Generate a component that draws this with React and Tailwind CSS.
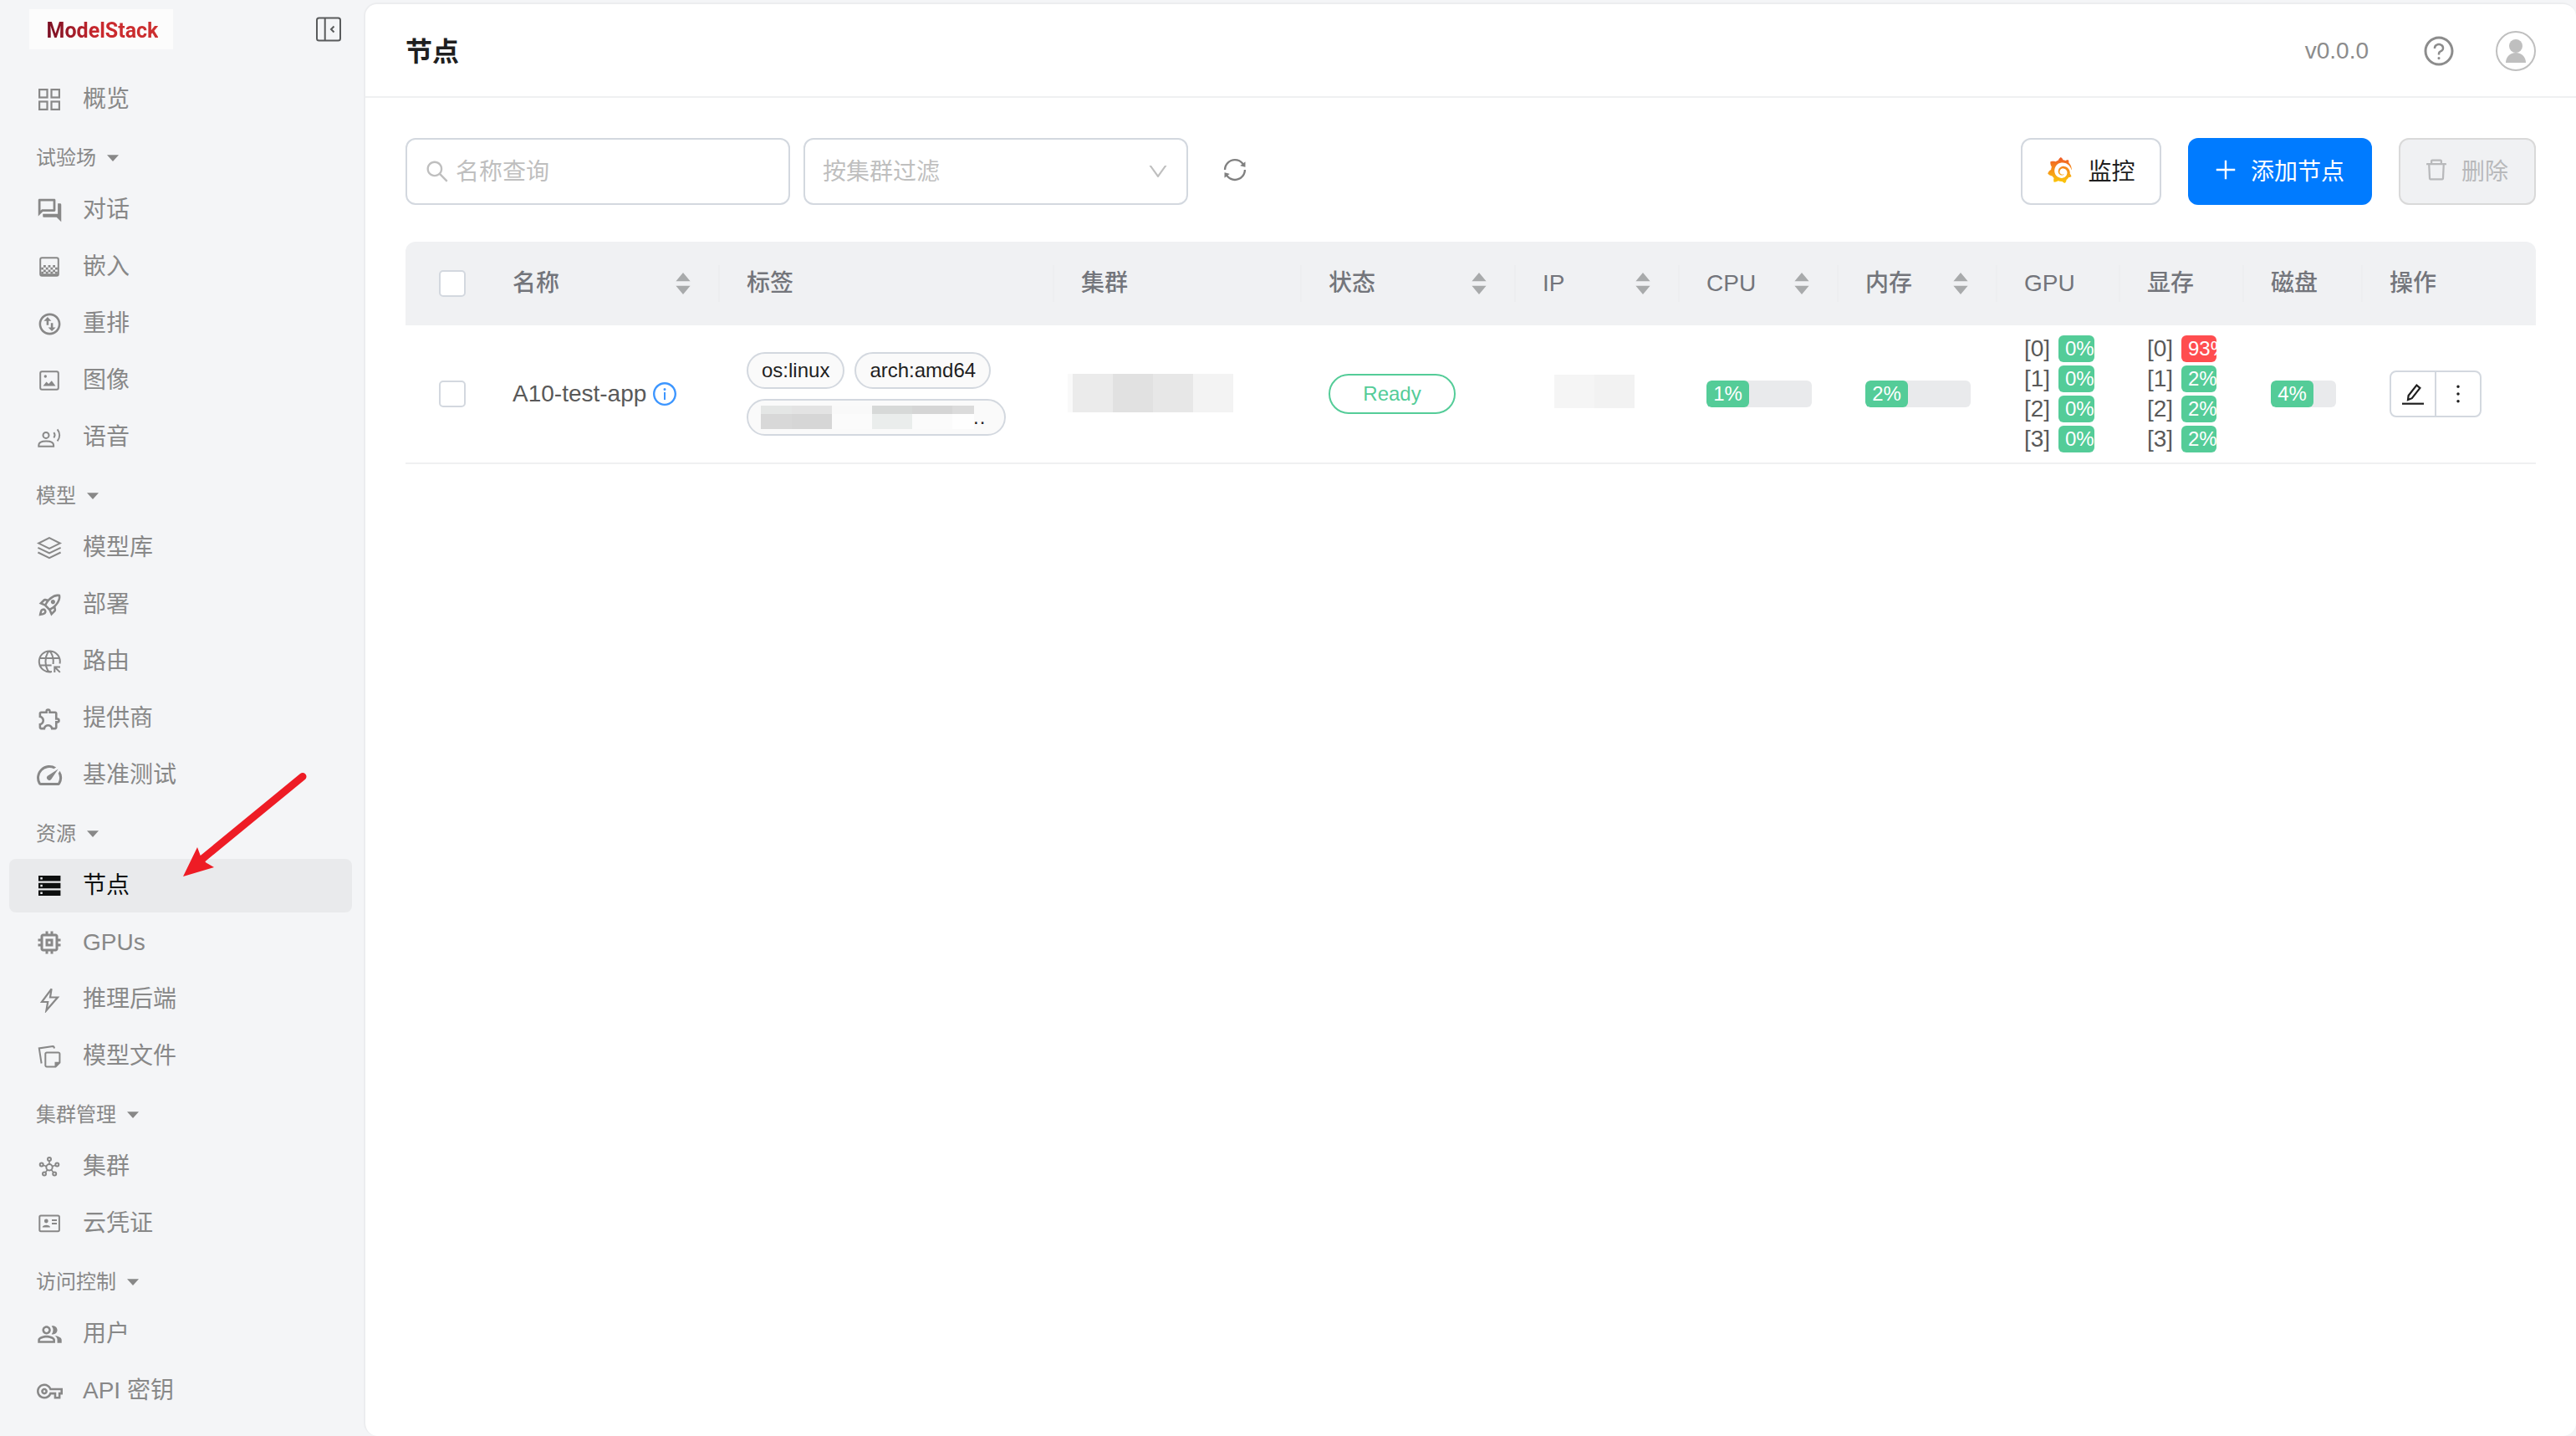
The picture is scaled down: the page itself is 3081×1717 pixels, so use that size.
import React, { useState } from "react";
import {
  MdOutlineForum,
  MdOutlineSwapVerticalCircle,
  MdOutlineRocketLaunch,
  MdOutlineExtension,
  MdOutlineSpeed,
  MdOutlineMemory,
  MdOutlinePeopleAlt,
  MdOutlineVpnKey,
} from "react-icons/md";
import {
  AiOutlineSearch,
  AiOutlineDown,
  AiOutlineSync,
  AiOutlinePlus,
  AiOutlineDelete,
  AiOutlineInfoCircle,
  AiOutlineQuestionCircle,
  AiOutlineMore,
} from "react-icons/ai";
import { SiGrafana } from "react-icons/si";

// Shared wrapper for the hand drawn menu icons
const Glyph = ({ children }) => (
  <svg viewBox="0 0 32 32" className="w-8 h-8" fill="none" stroke="currentColor" strokeWidth="2">
    {children}
  </svg>
);

const GridIcon = () => (
  <Glyph>
    <rect x="4.1" y="4.1" width="9.4" height="9.4" strokeWidth="2.2" />
    <rect x="18.5" y="4.1" width="9.4" height="9.4" strokeWidth="2.2" />
    <rect x="4.1" y="18.5" width="9.4" height="9.4" strokeWidth="2.2" />
    <rect x="18.5" y="18.5" width="9.4" height="9.4" strokeWidth="2.2" />
  </Glyph>
);

const EmbedIcon = () => (
  <Glyph>
    <rect x="5.2" y="5.2" width="21.6" height="21.6" rx="2" />
    <g fill="currentColor" stroke="none">
      <path d="M9 14h2.8v2.8H9zM14.6 14h2.8v2.8h-2.8zM20.2 14H23v2.8h-2.8z" />
      <path d="M6.2 16.8H9v2.8H6.2zM11.8 16.8h2.8v2.8h-2.8zM17.4 16.8h2.8v2.8h-2.8zM23 16.8h2.8v2.8H23z" />
      <path d="M9 19.6h2.8v2.8H9zM14.6 19.6h2.8v2.8h-2.8zM20.2 19.6H23v2.8h-2.8z" />
      <path d="M6.2 21.8H9v2.4H6.2zM11.8 21.8h2.8v2.4h-2.8zM17.4 21.8h2.8v2.4h-2.8zM23 21.8h2.8v2.4H23z" />
      <path d="M6 24.2h20v2H6z" />
    </g>
  </Glyph>
);

const ImageIcon = () => (
  <Glyph>
    <rect x="5.2" y="5.2" width="21.6" height="21.6" rx="2" />
    <circle cx="11.3" cy="11" r="1.7" fill="currentColor" stroke="none" />
    <path d="M8.5 22.4l4-5 2.7 2.6 3.6-3.8 4.7 6.2z" fill="currentColor" stroke="none" />
  </Glyph>
);

const VoiceIcon = () => (
  <Glyph>
    <circle cx="12" cy="13.4" r="3.5" />
    <path d="M3.3 26.7v-1.5c0-3 3.6-4.8 8.9-4.8s8.9 1.8 8.9 4.8v1.5z" />
    <path d="M21.3 10.2c1.5 1.9 1.5 4.3 0 6.2M25.6 6.4c3.4 4.2 3.4 9.7 0 14" />
  </Glyph>
);

const LayersIcon = () => (
  <Glyph>
    <path d="M16 4.2l12.8 6.4L16 17 3.2 10.6z" />
    <path d="M2.4 15.9L16 22.5l13.6-6.6M2.4 21.5L16 28.1l13.6-6.6" />
  </Glyph>
);

const RouteIcon = () => (
  <Glyph>
    <path d="M19 28.1A12.5 12.5 0 1 1 28.500 18.500M3.600 12h24.800M3.600 20.500h15M18 28.400c-2 .300-3-.400-4-2-3.400-5.600-3.400-15.200 0-20.800 1.200-2.200 2.800-2.200 4 0 2.400 4 3.200 8.600 2.600 13.400" />
    <path d="M22.3 29v-6.6h6.7M22.6 22.7l6.2 6.2" />
  </Glyph>
);

const NodesIcon = () => (
  <Glyph>
    <path
      d="M3 4h26.4v6.5H3zM5.3 6v2.5h2.5V6zM3 12.7h26.4v6.5H3zM5.3 14.7v2.5h2.5v-2.5zM3 21.4h26.4v6.5H3zM5.3 23.4v2.5h2.5v-2.5z"
      fill="currentColor"
      fillRule="evenodd"
      stroke="none"
    />
  </Glyph>
);

const BoltIcon = () => (
  <Glyph>
    <path d="M18.6 3.3L7 19h7.2l-1.8 10.2L26 13.5h-9z" strokeWidth="2.2" />
  </Glyph>
);

const FilesIcon = () => (
  <Glyph>
    <path d="M23.5 28.5H13a1.7 1.7 0 0 1-1.7-1.7V13.1a1.7 1.7 0 0 1 1.7-1.7h13.7a1.7 1.7 0 0 1 1.7 1.7v10.5z" />
    <path d="M22.5 29.3v-6.5h6.6z" fill="currentColor" stroke="none" />
    <path d="M6.6 24.5L3.8 6.4l16.4-2.5c.9 0 1.5.5 1.8 2.6" />
  </Glyph>
);

const ClusterIcon = () => (
  <Glyph>
    <circle cx="16" cy="16.8" r="3.7" />
    <circle cx="16" cy="7" r="2" />
    <circle cx="6.7" cy="13.6" r="2" />
    <circle cx="25.3" cy="13.6" r="2" />
    <circle cx="10" cy="24.6" r="2" />
    <circle cx="22.2" cy="24.6" r="2" />
    <path d="M16 9v4M8.600 14.300l3.800 1.200M23.400 14.300l-3.800 1.200M11.200 23l2.600-3.200M21 23l-2.600-3.200" strokeWidth="1.6" />
  </Glyph>
);

const CredentialIcon = () => (
  <Glyph>
    <rect x="4.3" y="6.4" width="23.6" height="18.8" rx="1.6" />
    <circle cx="12.3" cy="13" r="2.4" fill="currentColor" stroke="none" />
    <path d="M7.7 20.4c0-3.6 9.3-3.6 9.3 0z" fill="currentColor" stroke="none" />
    <path d="M19 12h6M19 16h6" />
  </Glyph>
);

const EditIcon = () => (
  <svg viewBox="0 0 28 28" className="w-7 h-7" fill="none" stroke="currentColor" strokeWidth="2.2">
    <path d="M18.4 3.6l4 3.4-9.6 12.2-4.8 1.8.6-5z" />
    <path d="M1 25.700h26" />
  </svg>
);

const menu = [
  { items: [{ label: "概览", icon: <GridIcon /> }] },
  {
    title: "试验场",
    items: [
      { label: "对话", icon: <MdOutlineForum size={33} /> },
      { label: "嵌入", icon: <EmbedIcon /> },
      { label: "重排", icon: <MdOutlineSwapVerticalCircle size={31} /> },
      { label: "图像", icon: <ImageIcon /> },
      { label: "语音", icon: <VoiceIcon /> },
    ],
  },
  {
    title: "模型",
    items: [
      { label: "模型库", icon: <LayersIcon /> },
      { label: "部署", icon: <MdOutlineRocketLaunch size={31} /> },
      { label: "路由", icon: <RouteIcon /> },
      { label: "提供商", icon: <MdOutlineExtension size={31} /> },
      { label: "基准测试", icon: <MdOutlineSpeed size={36} /> },
    ],
  },
  {
    title: "资源",
    items: [
      { label: "节点", icon: <NodesIcon /> },
      { label: "GPUs", icon: <MdOutlineMemory size={36} /> },
      { label: "推理后端", icon: <BoltIcon /> },
      { label: "模型文件", icon: <FilesIcon /> },
    ],
  },
  {
    title: "集群管理",
    items: [
      { label: "集群", icon: <ClusterIcon /> },
      { label: "云凭证", icon: <CredentialIcon /> },
    ],
  },
  {
    title: "访问控制",
    items: [
      { label: "用户", icon: <MdOutlinePeopleAlt size={31} /> },
      { label: "API 密钥", icon: <MdOutlineVpnKey size={31} /> },
    ],
  },
];

const columns = [
  { title: "名称", width: "w-[280px]", sort: true },
  { title: "标签", width: "w-[400px]" },
  { title: "集群", width: "w-[296px]" },
  { title: "状态", width: "w-[256px]", sort: true },
  { title: "IP", width: "w-[196px]", sort: true },
  { title: "CPU", width: "w-[190px]", sort: true },
  { title: "内存", width: "w-[190px]", sort: true },
  { title: "GPU", width: "w-[147px]" },
  { title: "显存", width: "w-[148px]" },
  { title: "磁盘", width: "w-[142px]" },
  { title: "操作", width: "w-[207px]", last: true },
];

const gpus = [0, 0, 0, 0];
const vram = [93, 2, 2, 2];

const Sidebar = ({ active, onSelect }) => (
  <aside className="w-[435px] shrink-0 text-[#888888]">
    <div className="flex justify-between h-[87px] pt-[11px] pl-[35px] pr-[27px]">
      <div className="w-[172px] h-12 pl-[3px] pt-0.5 bg-[#fcfcfc] flex items-center justify-center">
        <span className="font-[Roboto] font-bold text-[25px] leading-none bg-gradient-to-r from-[#7a1024] via-[#c9282d] via-45% to-[#cc3030] bg-clip-text text-transparent">
          ModelStack
        </span>
      </div>
      <svg viewBox="0 0 30 30" className="w-[30px] h-[30px] mt-[9px] text-[#595b5c]" fill="none" stroke="currentColor" strokeWidth="2">
        <rect x="1" y="1.5" width="28" height="27" rx="2.5" />
        <path d="M10.700 1.500v27M21.500 11.500L18 15l3.500 3.500" />
      </svg>
    </div>
    {menu.map((group, index) => (
      <div key={index}>
        {group.title && (
          <div className="h-16 flex items-center pl-[43px] text-2xl leading-none">
            <span className="pt-1">{group.title}</span>
            <svg viewBox="0 0 14 8" className="w-3.5 h-2 ml-[13px] mt-1" fill="currentColor">
              <path d="M0 .3h14L7 8z" />
            </svg>
          </div>
        )}
        {group.items.map((item) => (
          <div
            key={item.label}
            onClick={() => onSelect(item.label)}
            className={
              "h-16 mb-1 ml-[11px] mr-[14px] pl-8 rounded-lg flex items-center cursor-pointer " +
              (active === item.label ? "bg-[#e9eaec] text-[#0d0f0f]" : "")
            }
          >
            <span className="w-8 h-8 flex items-center justify-center *:shrink-0">{item.icon}</span>
            <span className="ml-6 text-[28px] leading-8 whitespace-nowrap">{item.label}</span>
          </div>
        ))}
      </div>
    ))}
  </aside>
);

const Checkbox = () => <span className="w-8 h-8 rounded-[5px] border-2 border-[#d3d8df] bg-white" />;

const Sorter = () => (
  <svg viewBox="0 0 18 26" className="w-[18px] h-[26px]" fill="#a8aaab">
    <path d="M9 0l8.600 10.200H.4zM9 26L.4 15.800h17.200z" />
  </svg>
);

const Progress = ({ value, width }) => (
  <div className={"h-8 rounded-[6px] bg-[#e9eaec] overflow-hidden " + width}>
    <div className="w-[51px] h-8 rounded-[6px] bg-[#54cc98] text-white text-2xl leading-8 text-center">{value}%</div>
  </div>
);

const DeviceList = ({ values, width }) => (
  <div className="flex flex-col gap-1">
    {values.map((value, index) => (
      <div key={index} className="flex items-center h-8">
        <span className="w-[41px] text-[28px] leading-8">[{index}]</span>
        <span
          className={
            "h-8 pl-2 rounded-[6px] overflow-hidden text-white text-2xl leading-8 " +
            width +
            (value > 80 ? " bg-[#ff4d4f]" : " bg-[#54cc98]")
          }
        >
          {value}%
        </span>
      </div>
    ))}
  </div>
);

const Tag = ({ children }) => (
  <span className="h-11 px-4 rounded-full border-2 border-[#d3d8df] bg-[#fafafa] text-2xl leading-10 text-[#1f1f1f]">
    {children}
  </span>
);

// Redacted values are shown as grey tiles
const MaskedLabel = () => (
  <div className="w-[310px] h-11 rounded-full border-2 border-[#d3d8df] bg-[#fafafa] flex items-center pl-[15px] text-[#1f1f1f]">
    <div className="h-7 flex flex-col">
      <div className="h-2.5 flex">
        <i className="w-[37px] bg-[#e4e6e5]" />
        <i className="w-12 bg-[#e3e3e3]" />
        <i className="w-12 bg-[#f9f9f9]" />
        <i className="w-12 bg-[#d7d9d8]" />
        <i className="w-12 bg-[#d5d5d5]" />
        <i className="w-[26px] bg-[#dbdbdb]" />
      </div>
      <div className="h-[18px] flex">
        <i className="w-[37px] bg-[#d8d8d8]" />
        <i className="w-12 bg-[#d6d6d6]" />
        <i className="w-12 bg-[#fbfbfb]" />
        <i className="w-12 bg-[#eaedec]" />
        <i className="w-12 bg-[#fbfbfb]" />
        <i className="w-[26px] bg-[#fefefe]" />
      </div>
    </div>
    <span className="-ml-px text-2xl leading-8 tracking-[1px]">..</span>
  </div>
);

const App = () => {
  const [active, setActive] = useState("节点");

  return (
    <div className="relative flex w-full h-[1717px] overflow-hidden bg-[#f4f5f7] font-['Liberation_Sans','Noto_Sans_CJK_SC',sans-serif]">
      <Sidebar active={active} onSelect={setActive} />

      <main className="flex-1 mt-[3px] rounded-2xl border-2 border-r-0 border-b-0 border-[#ecedef] bg-white">
        <header className="h-[112px] flex items-center justify-between pl-12 pr-12 pt-0.5 border-b-2 border-[#eff0f1]">
          <h1 className="text-[32px] leading-10 pt-px font-bold text-[#1f1f1f]">节点</h1>
          <div className="flex items-center text-[#8c8c8c]">
            <span className="text-[28px] leading-8">v0.0.0</span>
            <AiOutlineQuestionCircle size={40} className="ml-16" />
            <span className="ml-12 w-12 h-12 rounded-full border-2 border-[#bfbfbf] flex items-center justify-center">
              <svg viewBox="0 0 24 28" className="w-6 h-7" fill="#bfbfbf">
                <circle cx="12" cy="8" r="8" />
                <path d="M0 28c0-7 5-12 12-12s12 5 12 12z" />
              </svg>
            </span>
          </div>
        </header>

        <div className="px-12 pt-12">
          <div className="flex items-center h-20">
            <div className="w-[460px] h-20 px-5 rounded-xl border-2 border-[#d3d8df] flex items-center text-[#bfbfbf]">
              <AiOutlineSearch size={32} />
              <span className="ml-1.5 text-[28px] leading-8 pt-0.5">名称查询</span>
            </div>
            <div className="w-[460px] h-20 ml-4 pl-[21px] pr-5 rounded-xl border-2 border-[#d3d8df] flex items-center justify-between text-[#bfbfbf]">
              <span className="text-[28px] leading-8 pt-0.5">按集群过滤</span>
              <AiOutlineDown size={28} />
            </div>
            <AiOutlineSync size={32} className="ml-10 mb-1 text-[#808080]" />

            <button className="ml-auto w-[168px] h-20 rounded-xl border-2 border-[#d3d8df] flex items-center justify-center text-[#1f1f1f]">
              <svg className="w-0 h-0">
                <defs>
                  <linearGradient id="flame" x1="0" y1="0" x2="0" y2="1">
                    <stop offset="0" stopColor="#f05a28" />
                    <stop offset="1" stopColor="#fbca0a" />
                  </linearGradient>
                </defs>
              </svg>
              <SiGrafana size={31} className="mb-1" style={{ fill: "url(#flame)" }} />
              <span className="ml-[18px] text-[28px] leading-8 pt-0.5">监控</span>
            </button>
            <button className="ml-8 w-[220px] h-20 rounded-xl bg-[#007bff] flex items-center justify-center text-white">
              <AiOutlinePlus size={32} className="-ml-1 mb-1" />
              <span className="ml-3.5 text-[28px] leading-8 pt-0.5">添加节点</span>
            </button>
            <button className="ml-8 w-[164px] h-20 rounded-xl border-2 border-[#d9d9d9] bg-[#f0f1f3] flex items-center justify-center text-[#b8b9bb]">
              <AiOutlineDelete size={32} className="-ml-1 mb-1" />
              <span className="ml-3.5 text-[28px] leading-8 pt-0.5">删除</span>
            </button>
          </div>

          <div className="mt-11 text-[28px] leading-8">
            <div className="h-[100px] rounded-t-xl bg-[#f0f1f3] flex items-center font-medium text-[#73757b]">
              <div className="w-24 pl-10 flex">
                <Checkbox />
              </div>
              {columns.map((col) => (
                <div
                  key={col.title}
                  className={
                    "h-11 pl-8 pr-[33px] flex items-center justify-between border-r-2 shrink-0 " +
                    col.width +
                    (col.last ? " border-transparent" : " border-[#edeef0]")
                  }
                >
                  <span className="whitespace-nowrap">{col.title}</span>
                  {col.sort && <Sorter />}
                </div>
              ))}
            </div>

            <div className="h-[166px] border-b-2 border-[#eff0f1] flex items-center text-[#595959] *:shrink-0">
              <div className="w-24 pl-10 flex">
                <Checkbox />
              </div>
              <div className="w-[280px] pl-8 flex items-center whitespace-nowrap">
                A10-test-app
                <AiOutlineInfoCircle size={32} className="ml-1.5 text-[#3d96ff]" />
              </div>
              <div className="w-[400px] pl-8 flex flex-wrap gap-3">
                <Tag>os:linux</Tag>
                <Tag>arch:amd64</Tag>
                <MaskedLabel />
              </div>
              <div className="w-[296px] pl-4 pb-0.5 flex items-center">
                <i className="w-1.5 h-[46px] bg-[#f9f9f9]" />
                <i className="w-12 h-[46px] bg-[#ebebeb]" />
                <i className="w-12 h-[46px] bg-[#e1e1e1]" />
                <i className="w-12 h-[46px] bg-[#e7e7e7]" />
                <i className="w-12 h-[46px] bg-[#f3f3f3]" />
              </div>
              <div className="w-[256px] pl-8">
                <div className="w-[152px] h-12 rounded-full border-2 border-[#54cc98] text-[#54cc98] text-2xl leading-[44px] text-center">
                  Ready
                </div>
              </div>
              <div className="w-[196px] pl-[46px] pb-1.5 flex">
                <i className="w-12 h-10 bg-[#f5f5f5]" />
                <i className="w-12 h-10 bg-[#f2f2f2]" />
              </div>
              <div className="w-[190px] pl-8">
                <Progress value={1} width="w-[126px]" />
              </div>
              <div className="w-[190px] pl-8">
                <Progress value={2} width="w-[126px]" />
              </div>
              <div className="w-[147px] pl-8">
                <DeviceList values={gpus} width="w-[43px]" />
              </div>
              <div className="w-[148px] pl-8">
                <DeviceList values={vram} width="w-[42px]" />
              </div>
              <div className="w-[142px] pl-8">
                <Progress value={4} width="w-[78px]" />
              </div>
              <div className="w-[207px] pl-8">
                <div className="w-[110px] h-14 rounded-lg border-2 border-[#d3d8df] flex text-[#1f1f1f]">
                  <button className="w-[54px] border-r-2 border-[#d3d8df] flex items-center justify-center">
                    <EditIcon />
                  </button>
                  <button className="flex-1 flex items-center justify-center">
                    <AiOutlineMore size={32} />
                  </button>
                </div>
              </div>
            </div>
          </div>
        </div>
      </main>

      {/* Pointer to the active menu entry */}
      <svg viewBox="0 0 150 130" className="absolute left-[218px] top-[920px] w-[150px] h-[130px]">
        <path d="M144 8.500L24 107" stroke="#ee1c25" strokeWidth="9" strokeLinecap="round" />
        <path d="M1 128L18 93l4.500 12 6 6.500L38 117z" fill="#ee1c25" />
      </svg>
    </div>
  );
};

export default App;
